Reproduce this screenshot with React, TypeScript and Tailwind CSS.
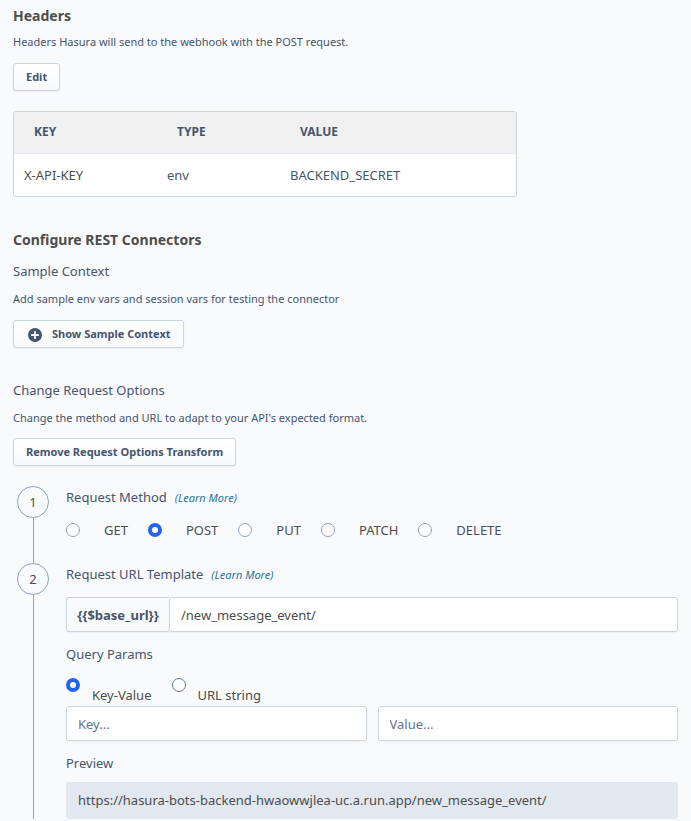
import { useState, type ReactNode } from "react";

const buttonClass =
  "h-7 rounded-[3px] border border-slate-300 bg-linear-to-t from-slate-50 to-white px-3 text-[11px] leading-4 font-bold text-slate-600 shadow-xs";

const inputClass =
  "h-[35px] w-full min-w-0 rounded-[3px] border border-slate-300 bg-white px-[11px] text-[13px] text-[#4d4d4d] shadow-xs placeholder:text-slate-500";

const radioClass =
  "size-[14px] shrink-0 appearance-none rounded-full border bg-white checked:border-4 checked:border-[#2563eb]";

function LearnMore() {
  return (
    <a href="#learn-more" className="ml-2 text-[11px] leading-4 text-[#297393] italic">
      (Learn More)
    </a>
  );
}

function Step({ number, children }: { number: number; children: ReactNode }) {
  return (
    <li className="flex gap-[17px] pl-1">
      <div className="flex w-8 shrink-0 flex-col items-center">
        <span className="flex size-8 shrink-0 items-center justify-center rounded-full border border-slate-400 text-[13px] text-[#4d4d4d]">
          {number}
        </span>
        <span className="w-px flex-1 bg-slate-400" />
      </div>
      <div className="min-w-0 flex-1 pt-px">{children}</div>
    </li>
  );
}

export default function App() {
  const [method, setMethod] = useState("POST");
  const [paramType, setParamType] = useState("Key-Value");
  const [path, setPath] = useState("/new_message_event/");

  return (
    <main className="min-h-screen bg-[#f9fafc] px-[13px] pt-1 pb-[2px] font-['Noto_Sans',sans-serif] text-[13px] leading-5 text-slate-600">
      <h2 className="text-[14px] leading-6 font-bold text-[#4d4d4d]">Headers</h2>
      <p className="mt-[6px] text-[11px] leading-4">
        Headers Hasura will send to the webhook with the POST request.
      </p>
      <button type="button" className={`mt-[13px] block ${buttonClass}`}>
        Edit
      </button>

      <div className="mt-5 w-[504px] max-w-full overflow-hidden rounded-[3px] border border-slate-300 bg-white">
        <table className="w-full table-fixed text-left">
          <colgroup>
            <col className="w-[143px]" />
            <col className="w-[123px]" />
            <col />
          </colgroup>
          <thead>
            <tr className="h-[41px] border-b border-slate-200 bg-[#f1f1f1] text-[12px]">
              <th className="pl-5 font-bold">KEY</th>
              <th className="pl-5 font-bold">TYPE</th>
              <th className="pl-5 font-bold">VALUE</th>
            </tr>
          </thead>
          <tbody>
            <tr className="h-[43px]">
              <td className="pl-[10px] text-[#4d4d4d]">X-API-KEY</td>
              <td className="pl-[10px]">env</td>
              <td className="pl-[10px]">BACKEND_SECRET</td>
            </tr>
          </tbody>
        </table>
      </div>

      <h2 className="mt-[31px] text-[14px] leading-6 font-bold text-[#4d4d4d]">
        Configure REST Connectors
      </h2>
      <h3 className="mt-[9px]">Sample Context</h3>
      <p className="mt-[10px] text-[11px] leading-4">
        Add sample env vars and session vars for testing the connector
      </p>
      <button type="button" className={`mt-[13px] flex items-center ${buttonClass}`}>
        <svg viewBox="0 0 14 14" className="mt-[2px] mr-[10px] ml-[2px] size-[14px]" aria-hidden="true">
          <circle cx="7" cy="7" r="7" fill="currentColor" />
          <path d="M7 3.8v6.4M3.8 7h6.4" stroke="white" strokeWidth="1.8" strokeLinecap="round" />
        </svg>
        Show Sample Context
      </button>

      <h3 className="mt-8">Change Request Options</h3>
      <p className="mt-[10px] text-[11px] leading-4">
        Change the method and URL to adapt to your API's expected format.
      </p>
      <button type="button" className={`mt-3 block ${buttonClass}`}>
        Remove Request Options Transform
      </button>

      <ol className="mt-5">
        <Step number={1}>
          <h4>
            Request Method
            <LearnMore />
          </h4>
          <div className="flex flex-wrap gap-x-5 pt-[13px] pb-[23px] text-[#4d4d4d]">
            {["GET", "POST", "PUT", "PATCH", "DELETE"].map((name) => (
              <label key={name} className="flex items-center gap-6">
                <input
                  type="radio"
                  name="method"
                  className={`border-slate-400 ${radioClass}`}
                  checked={method === name}
                  onChange={() => setMethod(name)}
                />
                {name}
              </label>
            ))}
          </div>
        </Step>
        <Step number={2}>
          <h4>
            Request URL Template
            <LearnMore />
          </h4>
          <div className="mt-[13px] flex">
            <label
              htmlFor="path"
              className="flex w-[103px] shrink-0 items-center justify-center rounded-l-[3px] border border-r-0 border-slate-300 font-bold shadow-xs"
            >
              {"{{$base_url}}"}
            </label>
            <input
              id="path"
              type="text"
              value={path}
              onChange={(e) => setPath(e.target.value)}
              className={inputClass}
            />
          </div>
          <h4 className="mt-3">Query Params</h4>
          <div className="mt-[14px] flex gap-5 text-[#4d4d4d]">
            {["Key-Value", "URL string"].map((name) => (
              <label key={name} className="flex gap-3">
                <input
                  type="radio"
                  name="paramType"
                  className={`border-slate-500 ${radioClass}`}
                  checked={paramType === name}
                  onChange={() => setParamType(name)}
                />
                <span className="pt-[7px]">{name}</span>
              </label>
            ))}
          </div>
          <div className="mt-px grid grid-cols-2 gap-[11px]">
            <input type="text" aria-label="Key" placeholder="Key..." className={inputClass} />
            <input type="text" aria-label="Value" placeholder="Value..." className={inputClass} />
          </div>
          <h4 className="mt-3">Preview</h4>
          <p className="mt-[9px] rounded-[3px] bg-slate-200 px-3 py-2 leading-[21px] break-words text-[#4d4d4d]">
            https://hasura-bots-backend-hwaowwjlea-uc.a.run.app{path}
          </p>
        </Step>
      </ol>
    </main>
  );
}
